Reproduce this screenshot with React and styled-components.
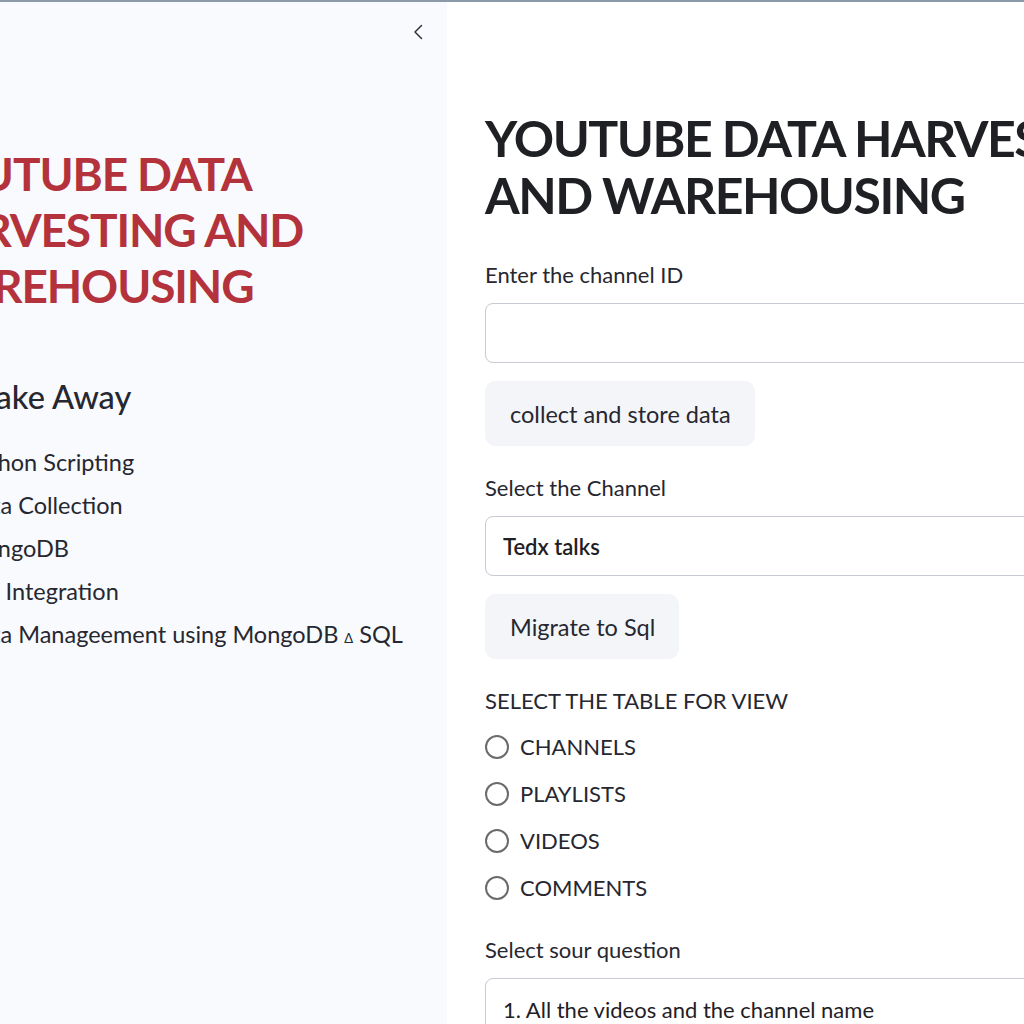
import React, { useState } from 'react';
import styled, { createGlobalStyle } from 'styled-components';

const GlobalStyle = createGlobalStyle`
  html, body {
    margin: 0;
    padding: 0;
    background: #ffffff;
  }
  body {
    font-family: Lato, "Noto Sans", sans-serif;
    color: #262730;
  }
`;

const Page = styled.div`
  display: flex;
  width: 1024px;
  height: 1024px;
  overflow: hidden;
  border-top: 2px solid #8a9aa8;
  box-sizing: border-box;
`;

const Sidebar = styled.aside`
  width: 447px;
  flex-shrink: 0;
  background: #f8fafd;
  overflow: hidden;
  display: flex;
  flex-direction: column;
`;

const SidebarTop = styled.div`
  display: flex;
  justify-content: flex-end;
  padding: 18px 16px 0 0;
  height: 104px;
`;

const Collapse = styled.button`
  border: none;
  background: none;
  padding: 0;
  width: 24px;
  height: 24px;
  cursor: pointer;
  color: #31333f;
`;

const SideTitle = styled.h1`
  margin: 22px 0 0 -83px;
  font-size: 46px;
  line-height: 56px;
  font-weight: 700;
  letter-spacing: -1.1px;
  color: #b3323b;
  white-space: nowrap;
`;

const SideHeading = styled.h2`
  margin: 63px 0 0 -20px;
  font-size: 32.5px;
  font-weight: 500;
  color: #262730;
  white-space: nowrap;
`;

const TakeList = styled.ul`
  list-style: none;
  margin: 33px 0 0 -37px;
  padding: 0;
  display: flex;
  flex-direction: column;
  gap: 16px;
`;

const TakeItem = styled.li`
  font-size: 23.5px;
  line-height: 27px;
  color: #262730;
  white-space: nowrap;
`;

const Small = styled.span`
  font-size: 13px;
`;

const Main = styled.main`
  flex: 1;
  padding: 108px 0 0 38px;
  overflow: hidden;
`;

const Title = styled.h1`
  margin: 0 0 37px;
  font-size: 50px;
  line-height: 57px;
  font-weight: 700;
  letter-spacing: -1.5px;
  color: #1f2024;
  white-space: nowrap;
`;

const Label = styled.div`
  font-size: 22px;
  line-height: 28px;
  color: #262730;
  margin-bottom: 14px;
`;

const TextBox = styled.div`
  width: 600px;
  height: ${p => (p.$tall ? 62 : 60)}px;
  box-sizing: border-box;
  border: 1px solid #c5cad3;
  border-radius: 8px;
  display: flex;
  align-items: center;
  padding-left: 17px;
  font-size: 22px;
  font-weight: ${p => (p.$bold ? 600 : 400)};
  color: #1f2024;
`;

const Button = styled.button`
  display: block;
  margin: 18px 0 28px;
  height: 65px;
  padding: 0 24px 0 25px;
  border: none;
  border-radius: 10px;
  background: #f3f5f8;
  font-family: inherit;
  font-size: 23.5px;
  color: #262730;
  cursor: pointer;
`;

const RadioGroup = styled.div`
  display: flex;
  flex-direction: column;
  gap: 20px;
  margin-top: 18px;
  margin-bottom: 35px;
`;

const RadioRow = styled.label`
  display: flex;
  align-items: center;
  gap: 11px;
  font-size: 22px;
  line-height: 27px;
  color: #262730;
  cursor: pointer;
`;

const RadioCircle = styled.span`
  width: 24px;
  height: 24px;
  box-sizing: border-box;
  border-radius: 50%;
  border: 2px solid #6b6b6b;
  background: ${p => (p.$on ? '#6b6b6b' : 'transparent')};
`;

const takeAways = [
  'Python Scripting',
  'Data Collection',
  'MongoDB',
  'API Integration',
];

const tables = ['CHANNELS', 'PLAYLISTS', 'VIDEOS', 'COMMENTS'];

export default function App() {
  const [table, setTable] = useState(null);

  return (
    <>
      <GlobalStyle />
      <Page>
        <Sidebar>
          <SidebarTop>
            <Collapse aria-label="collapse sidebar">
              <svg width="24" height="24" viewBox="0 0 24 24" fill="none" stroke="currentColor" strokeWidth="1.5" strokeLinecap="round" strokeLinejoin="round">
                <path d="M14.5 5.5L8 12l6.5 6.5" />
              </svg>
            </Collapse>
          </SidebarTop>
          <SideTitle>
            YOUTUBE DATA
            <br />
            HARVESTING AND
            <br />
            WAREHOUSING
          </SideTitle>
          <SideHeading>Take Away</SideHeading>
          <TakeList>
            {takeAways.map(t => (
              <TakeItem key={t}>{t}</TakeItem>
            ))}
            <TakeItem>
              Data Manageement using MongoDB <Small>{'\u0394'}</Small> SQL
            </TakeItem>
          </TakeList>
        </Sidebar>
        <Main>
          <Title>
            YOUTUBE DATA HARVESTING
            <br />
            AND WAREHOUSING
          </Title>
          <Label>Enter the channel ID</Label>
          <TextBox />
          <Button>collect and store data</Button>
          <Label>Select the Channel</Label>
          <TextBox $bold>Tedx talks</TextBox>
          <Button>Migrate to Sql</Button>
          <Label>SELECT THE TABLE FOR VIEW</Label>
          <RadioGroup>
            {tables.map(t => (
              <RadioRow key={t} onClick={() => setTable(t)}>
                <RadioCircle $on={table === t} />
                {t}
              </RadioRow>
            ))}
          </RadioGroup>
          <Label>Select sour question</Label>
          <TextBox $tall>1. All the videos and the channel name</TextBox>
        </Main>
      </Page>
    </>
  );
}
